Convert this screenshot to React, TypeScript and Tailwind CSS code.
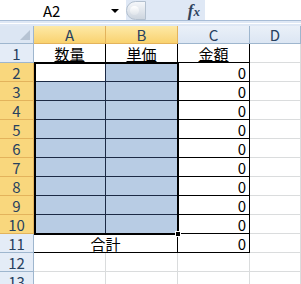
import React from 'react';

const font = { fontFamily: '"Noto Sans CJK JP", "Noto Sans", sans-serif' };

const rowsSel = [2, 3, 4, 5, 6, 7, 8, 9, 10];

function ColHead({ label, sel }: { label: string; sel?: boolean }) {
  return (
    <div
      className={`h-[18px] flex items-center justify-center border-b border-r text-[15px] leading-none text-[#27415f] ${
        sel
          ? 'bg-gradient-to-b from-[#fde9a6] to-[#f9d26f] border-[#e3b35c]'
          : 'bg-gradient-to-b from-[#eaf0f8] to-[#dce6f3] border-[#9eb6ce]'
      }`}
    >
      {label}
    </div>
  );
}

function RowHead({ n, sel }: { n: number; sel?: boolean }) {
  return (
    <div
      className={`h-[19px] flex items-center justify-center border-b border-r text-[15px] leading-none text-[#27415f] ${
        sel ? 'bg-[#f9d77d] border-[#e3b35c]' : 'bg-[#e4ecf7] border-[#9eb6ce]'
      }`}
    >
      {n}
    </div>
  );
}

export default function App() {
  return (
    <div className="w-[301px] h-[284px] overflow-hidden bg-white select-none" style={font}>
      {/* formula bar */}
      <div className="h-[21px] flex bg-[#dfe8f5] border-b border-[#a7bcd6]">
        <div className="w-[126px] bg-white relative flex items-center">
          <span className="ml-[43px] text-[15px] leading-none text-black">A2</span>
          <span className="absolute left-[111px] top-[9px] w-0 h-0 border-l-[4px] border-r-[4px] border-t-[4px] border-l-transparent border-r-transparent border-t-black" />
        </div>
        <div className="w-[22px] flex items-center">
          <div className="w-[20px] h-[19px] rounded-l-full rounded-r-[3px] bg-gradient-to-b from-[#f5f7fa] to-[#cdd5df] border border-[#b3c0cf] flex items-center pl-[3px]">
            <div className="w-[9px] h-[9px] rounded-full bg-gradient-to-b from-[#ffffff] to-[#dfe4ea]" />
          </div>
        </div>
        <div className="w-[57px] flex items-center justify-end pr-[5px]">
          <span className="text-[17px] italic font-bold text-[#30445e] leading-none" style={{ fontFamily: '"Liberation Serif", serif' }}>
            f<span className="text-[13px]">x</span>
          </span>
        </div>
        <div className="flex-1 bg-white" />
      </div>
      <div className="h-[5px] bg-[#dfe8f5] flex flex-col justify-center">
        <div className="h-[1px] bg-white" />
      </div>

      {/* grid */}
      <div className="relative">
        <div className="grid grid-cols-[34px_72px_72px_72px_1fr]">
          {/* header row */}
          <div className="h-[18px] border-b border-r border-[#9eb6ce] bg-[#dce6f3] relative">
            <span className="absolute right-[3px] bottom-[3px] w-0 h-0 border-b-[10px] border-l-[10px] border-b-[#b6c3d3] border-l-transparent" />
          </div>
          <ColHead label="A" sel />
          <ColHead label="B" sel />
          <ColHead label="C" />
          <ColHead label="D" />

          {/* row 1 */}
          <RowHead n={1} />
          {['数量', '単価', '金額'].map((t) => (
            <div key={t} className="h-[19px] border-r border-b border-black flex items-end justify-center text-[15px] leading-[17px] text-black">
              <span className="underline underline-offset-[1px] decoration-1">{t}</span>
            </div>
          ))}
          <div className="h-[19px] border-r border-b border-[#dadcdd]" />

          {/* rows 2-10 */}
          {rowsSel.map((n) => (
            <React.Fragment key={n}>
              <RowHead n={n} sel />
              <div className={`h-[19px] border-r border-b border-[#1c2a45] ${n === 2 ? 'bg-white' : 'bg-[#b8cce4]'}`} />
              <div className="h-[19px] border-r border-b border-[#1c2a45] bg-[#b8cce4]" />
              <div className="h-[19px] border-r border-b border-black flex items-center justify-end pr-[3px] text-[15px] leading-none text-black">0</div>
              <div className="h-[19px] border-r border-b border-[#dadcdd]" />
            </React.Fragment>
          ))}

          {/* row 11 */}
          <RowHead n={11} />
          <div className="col-span-2 h-[19px] border-r border-b border-black flex items-center justify-center text-[15px] leading-none text-black">合計</div>
          <div className="h-[19px] border-r border-b border-black flex items-center justify-end pr-[3px] text-[15px] leading-none text-black">0</div>
          <div className="h-[19px] border-r border-b border-[#dadcdd]" />

          {/* rows 12-13 */}
          {[12, 13].map((n) => (
            <React.Fragment key={n}>
              <RowHead n={n} />
              <div className="h-[19px] border-r border-b border-[#dadcdd]" />
              <div className="h-[19px] border-r border-b border-[#dadcdd]" />
              <div className="h-[19px] border-r border-b border-[#dadcdd]" />
              <div className="h-[19px] border-r border-b border-[#dadcdd]" />
            </React.Fragment>
          ))}
        </div>

        {/* selection outline A2:B10 */}
        <div className="absolute left-[34px] top-[36px] w-[145px] h-[173px] border-2 border-black pointer-events-none" />
        <div className="absolute left-[175px] top-[205px] w-[6px] h-[6px] bg-black border border-white pointer-events-none" />
      </div>
    </div>
  );
}
